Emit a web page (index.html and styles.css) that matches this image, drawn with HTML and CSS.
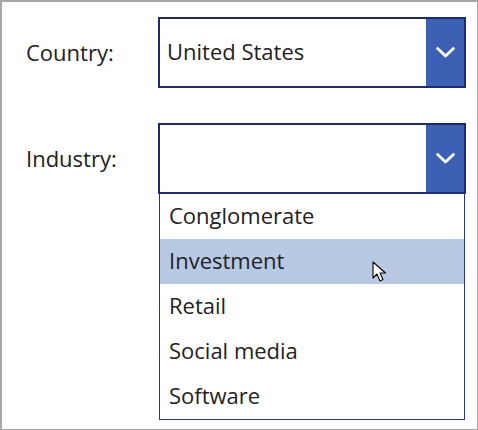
FILE: index.html
```html
<!DOCTYPE html>
<html>
<head>
<meta charset="utf-8">
<link rel="stylesheet" href="styles.css">
</head>
<body>
<div class="frame">
  <div class="row">
    <div class="label">Country:</div>
    <div class="field">
      <div class="combo">
        <div class="value">United States</div>
        <div class="btn"><svg width="19" height="11" viewBox="0 0 19 11"><path d="M1.6 1.6 L9.5 9 L17.4 1.6" fill="none" stroke="#fff" stroke-width="2.8" stroke-linecap="round" stroke-linejoin="round"/></svg></div>
      </div>
    </div>
  </div>
  <div class="row row2">
    <div class="label">Industry:</div>
    <div class="field">
      <div class="combo">
        <div class="value"></div>
        <div class="btn"><svg width="19" height="11" viewBox="0 0 19 11"><path d="M1.6 1.6 L9.5 9 L17.4 1.6" fill="none" stroke="#fff" stroke-width="2.8" stroke-linecap="round" stroke-linejoin="round"/></svg></div>
      </div>
      <ul class="list">
        <li>Conglomerate</li>
        <li class="hover">Investment
          <svg class="cursor" width="16" height="22" viewBox="0 0 16 22"><path d="M1 1 L1 17 L5 13 L8 20 L11 18.6 L8 12 L13.5 12 Z" fill="#fff" stroke="#000" stroke-width="1.1" stroke-linejoin="round"/></svg>
        </li>
        <li>Retail</li>
        <li>Social media</li>
        <li>Software</li>
      </ul>
    </div>
  </div>
</div>
</body>
</html>
```
FILE: styles.css
```css
html, body {
  margin: 0;
  padding: 0;
  background: #fff;
}
.frame {
  box-sizing: border-box;
  width: 478px;
  height: 430px;
  border: 2px solid #a7a7a7;
  border-right-width: 1px;
  border-bottom-width: 1px;
  padding-top: 15px;
  font-family: "Open Sans", "Noto Sans", sans-serif;
  font-size: 22px;
  color: #222;
}
.row {
  display: flex;
  align-items: flex-start;
}
.row2 {
  margin-top: 35px;
}
.label {
  width: 156px;
  flex-shrink: 0;
  padding-left: 24px;
  padding-bottom: 2px;
  box-sizing: border-box;
  height: 71px;
  display: flex;
  align-items: center;
}
.field {
  width: 308px;
  flex-shrink: 0;
  display: flex;
  flex-direction: column;
}
.combo {
  box-sizing: border-box;
  height: 71px;
  border: 2px solid #1e2b73;
  display: flex;
}
.value {
  flex: 1;
  padding-left: 7px;
  display: flex;
  align-items: center;
  padding-bottom: 3px;
}
.btn {
  width: 38px;
  background: #3b60b4;
  display: flex;
  align-items: center;
  justify-content: center;
}
.list {
  list-style: none;
  margin: 0;
  padding: 0;
  box-sizing: border-box;
  border: 1.5px solid #2a3a80;
  border-top: none;
  margin-left: 1px;
  margin-right: 1px;
}
.list li {
  box-sizing: border-box;
  height: 45px;
  padding-left: 9px;
  padding-bottom: 4px;
  display: flex;
  align-items: center;
  position: relative;
}
.list li.hover {
  background: #b8c9e4;
}
.cursor {
  position: absolute;
  left: 212px;
  top: 22px;
}
```
